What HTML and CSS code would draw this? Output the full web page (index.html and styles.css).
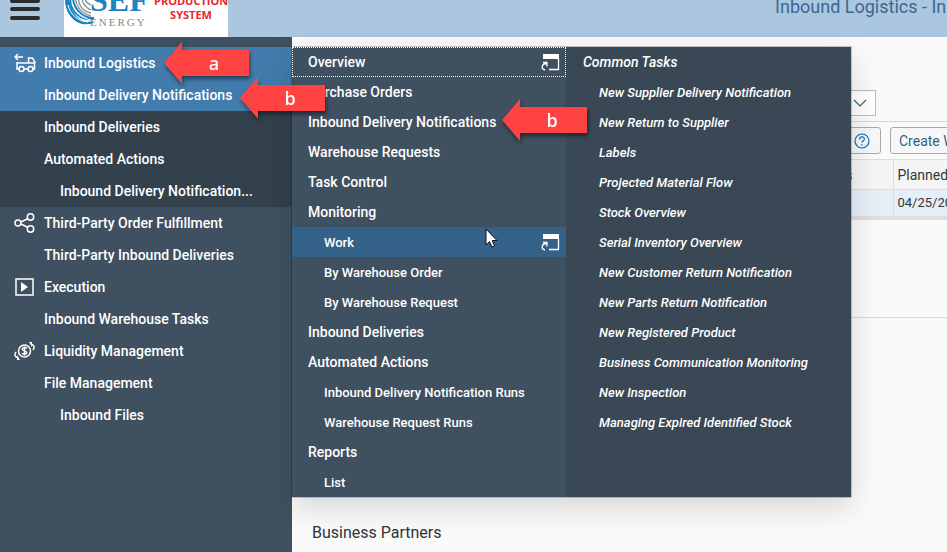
FILE: index.html
```
<!DOCTYPE html>
<html lang="en">
  <head>
    <meta charset="utf-8">
    <title>Inbound Logistics</title>
    <link rel="stylesheet" href="styles.css">
  </head>
  <body>
    <header class="topbar">
      <button class="menu-button" aria-label="Menu">
        <svg width="30" height="32" viewBox="0 0 30 32"><path d="M2 12h26M2 20h26M2 29h26" stroke="#2b2b2b" stroke-width="4" stroke-linecap="round"/></svg>
      </button>
      <div class="logo">
        <svg class="swirl" width="32" height="44" viewBox="0 0 32 44" fill="none">
          <path d="M12 10C10 20 17 28 27 31M15 10C13 19 18 26 27 28M18 10C17 16 20 22 27 25M21 10C20 14 22 18 27 20" stroke="#8d9297" stroke-width="1.3"/>
          <path d="M1 12C1 28 12 44 29 38C14 38 6 26 5 12" fill="#1b83bf"/>
          <path d="M6 12C6 26 16 36 30 34M9 12C9 23 18 33 30 33M2 16C3 31 14 41 29 37" stroke="#1b83bf" stroke-width="2"/>
          <path d="M4 20C6 29 13 36 24 37M8 18C10 27 17 33 27 35" stroke="#fff" stroke-width="1"/>
        </svg>
        <div class="brand">
          <span class="brand-name">SEF</span>
          <span class="brand-sub">ENERGY</span>
        </div>
        <div class="system">PRODUCTION<br>SYSTEM</div>
      </div>
      <h1 class="title">Inbound Logistics - Inb</h1>
    </header>

    <div class="main">
      <nav class="sidebar">
        <ul>
          <li class="active"><svg class="icon" viewBox="0 0 22 20"><path d="M9 4H1m3-3L1 4l3 3M3 9v7h2m5 0h4m5 0h1.500v-6h-6V5h4l3 5M14 10H3" /><circle cx="7.500" cy="16" r="2.500"/><circle cx="16.500" cy="16" r="2.500"/></svg><a href="#">Inbound Logistics</a></li>
          <li class="active"><a href="#">Inbound Delivery Notifications</a></li>
          <li class="open"><a href="#">Inbound Deliveries</a></li>
          <li class="open"><a href="#">Automated Actions</a></li>
          <li class="open sub"><a href="#">Inbound Delivery Notification...</a></li>
          <li><svg class="icon" viewBox="0 0 22 20"><circle cx="4" cy="10" r="3"/><circle cx="16.500" cy="4" r="3.200"/><circle cx="16.500" cy="16" r="3.200"/><path d="M7 9l7-3.500M7 11l7 3.500"/></svg><a href="#">Third-Party Order Fulfillment</a></li>
          <li><a href="#">Third-Party Inbound Deliveries</a></li>
          <li><svg class="icon" viewBox="0 0 22 20"><path d="M2 2h17v16H2z"/><path class="solid" d="M7 5l7 5-7 5z"/></svg><a href="#">Execution</a></li>
          <li><a href="#">Inbound Warehouse Tasks</a></li>
          <li><svg class="icon" viewBox="0 0 22 20"><circle cx="10.500" cy="10" r="6"/><path d="M13 7.500C11.500 6 8 6.500 8.300 8.500c.3 2 4.500 1 4.500 3.200 0 1.800-3 2-4.700.5M10.500 5.500v9"/><path d="M17 3c3 1 4 3 2 6M4 17c-3-1-4-3-2-6"/><path class="solid" d="M15 1h3v5zM6 19H3v-5z"/></svg><a href="#">Liquidity Management</a></li>
          <li><a href="#">File Management</a></li>
          <li class="sub"><a href="#">Inbound Files</a></li>
        </ul>
      </nav>

      <main class="content">
        <div class="filter">
          <select class="view-select" aria-label="View"><option></option></select>
          <svg class="chevron" width="14" height="8" viewBox="0 0 14 8"><path d="M1 1l6 6 6-6" fill="none" stroke="#34617f" stroke-width="1.200"/></svg>
        </div>
        <div class="toolbar">
          <button class="help" aria-label="Help">
            <svg width="16" height="16" viewBox="0 0 16 16" fill="none" stroke="#0a6ebd" stroke-width="1.200"><circle cx="8" cy="8" r="7"/><path d="M5.700 6.500C5.700 3 10.500 3.200 10.400 6c0 1.800-2.400 1.800-2.400 3.600M8 11v1.500"/></svg>
          </button>
          <button>Create W</button>
        </div>
        <table class="grid">
          <thead><tr><th class="status">s</th><th>Planned</th></tr></thead>
          <tbody><tr><td></td><td>04/25/20</td></tr></tbody>
        </table>
        <hr class="divider">
        <h2 class="partners">Business Partners</h2>
      </main>

      <div class="flyout">
        <ul class="views">
          <li class="focused"><a href="#">Overview</a><button class="open-window" aria-label="Open Overview in new window"><svg width="19" height="18" viewBox="0 0 19 18"><path d="M2 1h16v5H2z" fill="#fff"/><path d="M17.500 5v11.500H8" fill="none" stroke="#fff" stroke-width="1.300"/><path d="M4 17C0 16 0 11 5.500 10.500M2 9.500h4v4" fill="none" stroke="#fff" stroke-width="1.300"/></svg></button></li>
          <li><a href="#">Purchase Orders</a></li>
          <li><a href="#">Inbound Delivery Notifications</a></li>
          <li><a href="#">Warehouse Requests</a></li>
          <li><a href="#">Task Control</a></li>
          <li><a href="#">Monitoring</a></li>
          <li class="sub hovered"><a href="#">Work</a><button class="open-window" aria-label="Open Work in new window"><svg width="19" height="18" viewBox="0 0 19 18"><path d="M2 1h16v5H2z" fill="#fff"/><path d="M17.500 5v11.500H8" fill="none" stroke="#fff" stroke-width="1.300"/><path d="M4 17C0 16 0 11 5.500 10.500M2 9.500h4v4" fill="none" stroke="#fff" stroke-width="1.300"/></svg></button></li>
          <li class="sub"><a href="#">By Warehouse Order</a></li>
          <li class="sub"><a href="#">By Warehouse Request</a></li>
          <li><a href="#">Inbound Deliveries</a></li>
          <li><a href="#">Automated Actions</a></li>
          <li class="sub"><a href="#">Inbound Delivery Notification Runs</a></li>
          <li class="sub"><a href="#">Warehouse Request Runs</a></li>
          <li><a href="#">Reports</a></li>
          <li class="sub"><a href="#">List</a></li>
        </ul>
        <ul class="tasks">
          <li>Common Tasks</li>
          <li class="sub"><a href="#">New Supplier Delivery Notification</a></li>
          <li class="sub"><a href="#">New Return to Supplier</a></li>
          <li class="sub"><a href="#">Labels</a></li>
          <li class="sub"><a href="#">Projected Material Flow</a></li>
          <li class="sub"><a href="#">Stock Overview</a></li>
          <li class="sub"><a href="#">Serial Inventory Overview</a></li>
          <li class="sub"><a href="#">New Customer Return Notification</a></li>
          <li class="sub"><a href="#">New Parts Return Notification</a></li>
          <li class="sub"><a href="#">New Registered Product</a></li>
          <li class="sub"><a href="#">Business Communication Monitoring</a></li>
          <li class="sub"><a href="#">New Inspection</a></li>
          <li class="sub"><a href="#">Managing Expired Identified Stock</a></li>
        </ul>
      </div>
    </div>

    <!-- step markers -->
    <div class="marker step-a">a</div>
    <div class="marker step-b">b</div>
    <div class="marker step-b2">b</div>
    <svg class="cursor" width="13" height="20" viewBox="0 0 13 20"><path d="M1 1v16l3.500-3.500L7 19l2.500-1-2.300-5.500H12z" fill="#fff" stroke="#111" stroke-width="1"/></svg>
  </body>
</html>
```

FILE: styles.css
```
* {
  box-sizing: border-box;
}

body {
  font-family: Roboto, "Liberation Sans", sans-serif;
  font-size: 14px;
  margin: 0;
  background-color: #fafafa;
  color: #333;
  overflow: hidden;
}

ul {
  list-style: none;
  margin: 0;
  padding: 0;
}

a {
  color: inherit;
  text-decoration: none;
}

button {
  font: inherit;
  cursor: pointer;
}

/* top bar */
.topbar {
  display: flex;
  align-items: flex-end;
  height: 37px;
  overflow: hidden;
  background-color: #abc7df;
}

.menu-button {
  flex: 0 0 64px;
  padding: 0 10px 16px;
  border: 0;
  background: none;
  text-align: left;
}

.menu-button svg {
  display: block;
  overflow: visible;
}

.logo {
  display: flex;
  align-items: flex-end;
  flex: 0 0 162px;
  height: 56px;
  padding-bottom: 8px;
  background-color: #fff;
}

.swirl {
  flex-shrink: 0;
  margin-right: -6px;
}

.brand {
  display: flex;
  flex-direction: column;
  flex: 0 0 64px;
}

.brand-name {
  font: bold 32px/30px "Liberation Serif", serif;
  color: #1b83bf;
}

.brand-sub {
  font: 11px/14px "Liberation Serif", serif;
  letter-spacing: 2px;
  color: #888;
}

.system {
  font: bold 11px/14px "Open Sans", sans-serif;
  color: #e8262f;
  text-align: center;
  padding-bottom: 7px;
}

.title {
  flex: 1;
  margin: 0 0 18px 547px;
  font-size: 18px;
  font-weight: normal;
  line-height: 24px;
  color: #3c678f;
  white-space: nowrap;
}

/* left navigation */
.main {
  display: flex;
  position: relative;
  min-height: calc(100vh - 37px);
}

.sidebar {
  flex: 0 0 292px;
  padding-top: 10px;
  background-color: #3f5060;
  color: #fff;
  font-weight: 500;
}

.sidebar li {
  display: flex;
  align-items: center;
  height: 32px;
  padding-left: 44px;
}

.sidebar .icon {
  width: 22px;
  height: 20px;
  margin: 0 8px 0 -30px;
  fill: none;
  stroke: #fff;
  stroke-width: 1.5;
}

.sidebar .icon .solid {
  fill: #fff;
  stroke: none;
}

.sidebar li.sub {
  padding-left: 60px;
}

.sidebar .active {
  background-color: #427cac;
}

.sidebar .open {
  background-color: #33414d;
}

/* page behind the menu */
.content {
  flex: 1;
  min-width: 0;
  overflow: hidden;
}

.filter {
  display: flex;
  align-items: center;
  padding: 53px 0 5px 20px;
  border-bottom: 1px solid #d5d5d5;
}

.view-select {
  width: 564px;
  height: 26px;
  border: 1px solid #bbb;
  background-color: #fff;
  appearance: none;
}

.chevron {
  margin-left: -23px;
}

.toolbar {
  display: grid;
  grid-template-columns: 569px 200px;
  gap: 9px;
  padding: 5px 0 5px 20px;
}

.toolbar button {
  height: 27px;
  padding: 0 8px;
  border: 1px solid #aaa;
  border-radius: 3px;
  background-color: #f7f7f7;
  color: #34617f;
  text-align: left;
}

.toolbar .help {
  display: flex;
  align-items: center;
  justify-content: flex-end;
  padding-right: 10px;
}

.grid {
  width: 801px;
  table-layout: fixed;
  border-collapse: collapse;
  border-top: 1px solid #ddd;
  border-bottom: 4px solid #dedede;
}

.grid th,
.grid td {
  padding: 0 4px;
  font-weight: normal;
  text-align: left;
  border-right: 1px solid #ddd;
}

.grid th {
  height: 30px;
  background-color: #f5f5f5;
}

.grid td {
  height: 28px;
  background-color: #e6eef7;
  border-top: 1px solid #ddd;
  font-size: 13px;
}

.grid .status {
  width: 601px;
  padding-right: 40px;
  color: #34617f;
  text-align: right;
}

.divider {
  height: 1px;
  margin: 97px 0 0;
  border: 0;
  background-color: #d0dce8;
}

.partners {
  margin: 203px 20px 0;
  font-size: 16px;
  font-weight: normal;
  line-height: 24px;
}

/* flyout menu */
.flyout {
  position: absolute;
  top: 10px;
  left: 292px;
  display: flex;
  color: #fff;
  font-weight: 500;
  box-shadow: 0 0 0 1px rgba(0, 0, 0, 0.2), 0 10px 30px rgba(0, 0, 0, 0.15);
}

.flyout li {
  display: flex;
  align-items: center;
  justify-content: space-between;
  height: 30px;
  padding: 0 6px 0 16px;
}

.flyout li.sub {
  padding-left: 32px;
  font-size: 13px;
}

.views {
  width: 274px;
  background-color: #3f5060;
}

.tasks {
  width: 285px;
  padding-left: 1px;
  background-color: #3a4856;
  font-style: italic;
}

.focused {
  outline: 1px dotted #fff;
  outline-offset: -1px;
}

.hovered {
  background-color: #346188;
}

.open-window {
  display: flex;
  padding: 0;
  border: 0;
  background: none;
}

/* red step arrows and pointer, drawn over the page */
.marker {
  position: absolute;
  width: 85px;
  height: 42px;
  padding-left: 15px;
  color: #fff;
  font: 600 18px/42px "Open Sans", sans-serif;
  text-align: center;
  filter: drop-shadow(1px 3px 2px rgba(0, 0, 0, 0.5));
}

.marker::before {
  content: "";
  position: absolute;
  inset: 0;
  z-index: -1;
  background-color: #ff4343;
  clip-path: polygon(0 50%, 18px 0, 18px 8px, 100% 8px, 100% 34px, 18px 34px, 18px 100%);
}

.step-a {
  top: 42px;
  left: 164px;
}

.step-b {
  top: 77px;
  left: 240px;
}

.step-b2 {
  top: 99px;
  left: 502px;
}

.cursor {
  position: absolute;
  top: 228px;
  left: 485px;
}
```
